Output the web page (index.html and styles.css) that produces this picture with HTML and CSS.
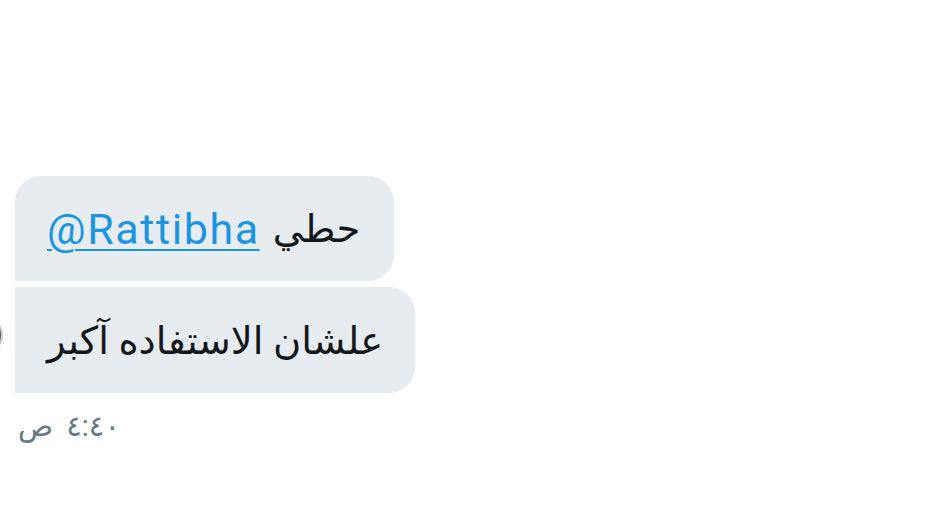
FILE: index.html
```html
<!DOCTYPE html>
<html lang="ar">
<head>
  <meta charset="UTF-8">
  <meta name="viewport" content="width=device-width, initial-scale=1.0">
  <title>رسالة</title>
  <link rel="stylesheet" href="styles.css">
</head>
<body>
  <main class="thread">
    <div class="group">
      <div class="avatar"></div>
      <div class="bubbles">
        <div class="bubble bubble-first" dir="rtl">حطي <a href="#" class="mention" dir="ltr">@Rattibha</a></div>
        <div class="bubble bubble-last" dir="rtl">علشان الاستفاده آكبر</div>
      </div>
    </div>
    <div class="time" dir="rtl">٤:٤٠ ص</div>
  </main>
</body>
</html>
```

FILE: styles.css
```css
* {
  box-sizing: border-box;
}

body {
  margin: 0;
  background-color: #fff;
  font-family: 'Roboto', 'DejaVu Sans', sans-serif;
  color: #14171a;
}

.thread {
  padding: 176px 0 0 15px;
}

.group {
  display: flex;
  align-items: flex-end;
}

.avatar {
  width: 40px;
  height: 40px;
  margin-left: -52px;
  margin-right: 12px;
  margin-bottom: 38px;
  border-radius: 50%;
  background-color: #5e5650;
  border: 2px solid #cfc8c0;
  flex-shrink: 0;
}

.bubbles {
  display: flex;
  flex-direction: column;
  align-items: flex-start;
  gap: 6px;
}

.bubble {
  background-color: #e6ecf0;
  height: 105px;
  padding: 0 32px;
  display: flex;
  align-items: center;
  font-size: 38.5px;
  white-space: nowrap;
}

.bubble-first {
  padding-right: 34px;
  border-radius: 26px 26px 26px 0;
}

.bubble-last {
  height: 106px;
  border-radius: 0 26px 26px 0;
}

.mention {
  color: #1b95e0;
  font-size: 43px;
  letter-spacing: 1.6px;
  text-decoration: underline;
  text-decoration-thickness: 2px;
  text-underline-offset: 5px;
  margin-right: 13px;
}

.time {
  margin-top: 16px;
  padding-left: 3px;
  text-align: left;
  font-size: 29px;
  word-spacing: 6px;
  color: #657786;
  direction: ltr;
}
```
